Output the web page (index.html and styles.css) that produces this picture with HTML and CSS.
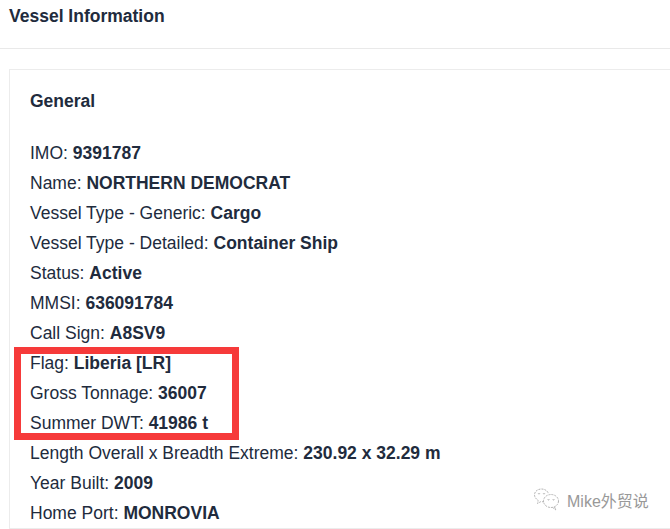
FILE: index.html
```html
<!DOCTYPE html>
<html lang="en">
<head>
<meta charset="utf-8">
<title>Vessel Information</title>
<link rel="stylesheet" href="styles.css">
</head>
<body>
<header class="page-head"><h1 class="page-title">Vessel Information</h1></header>
<main class="content">
  <section class="card">
    <h2 class="card-title">General</h2>
    <ul class="facts">
      <li>IMO: <b>9391787</b></li>
      <li>Name: <b>NORTHERN DEMOCRAT</b></li>
      <li>Vessel Type - Generic: <b>Cargo</b></li>
      <li>Vessel Type - Detailed: <b>Container Ship</b></li>
      <li>Status: <b>Active</b></li>
      <li>MMSI: <b>636091784</b></li>
      <li>Call Sign: <b>A8SV9</b></li>
      <li>Flag: <b>Liberia [LR]</b></li>
      <li>Gross Tonnage: <b>36007</b></li>
      <li>Summer DWT: <b>41986 t</b></li>
      <li>Length Overall x Breadth Extreme: <b>230.92 x 32.29 m</b></li>
      <li>Year Built: <b>2009</b></li>
      <li>Home Port: <b>MONROVIA</b></li>
    </ul>
  </section>
</main>
<div class="highlight"></div>
<div class="watermark">
  <svg class="wm-icon" width="27" height="24" viewBox="0 0 27 24" fill="none" stroke="#b4b4b4" stroke-width="1" stroke-dasharray="2 1">
    <path d="M11 13.5c-1 .3-2.200.4-3.300.2L4.500 15.500l.7-3C3 11 1.500 9 1.500 6.800 1.500 3.400 4.800 1 8.500 1c3.300 0 6.300 1.900 7 4.800"/>
    <ellipse cx="18" cy="13" rx="7.500" ry="6.500"/>
    <path d="M21.500 19l1.500 3-3.500-2.500"/>
    <circle cx="6" cy="5.500" r=".6"/>
    <circle cx="11" cy="5.500" r=".6"/>
    <circle cx="15.500" cy="11.500" r=".6"/>
    <circle cx="20.500" cy="11.500" r=".6"/>
  </svg>
  <span class="wm-text">Mike外贸说</span>
</div>
</body>
</html>
```
FILE: styles.css
```css
html, body {
  margin: 0;
  padding: 0;
  height: 529px;
  overflow: hidden;
  background: #fff;
}
body {
  font-family: "Liberation Sans", Arial, sans-serif;
  font-size: 17.500px;
  color: #212b3d;
  position: relative;
}
.page-head {
  height: 42px;
  border-bottom: 1px solid #e9e9e9;
  padding: 6px 9px 0;
}
.page-title {
  margin: 0;
  font-size: 17.500px;
  line-height: 20px;
  font-weight: 700;
}
.content { padding: 20px 0 0 9px; }
.card {
  border: 1px solid #ececec;
  border-right: 0;
  padding: 21px 20px 0;
}
.card-title {
  margin: 0 0 27px;
  font-size: 17.500px;
  line-height: 20px;
  font-weight: 700;
}
.facts {
  list-style: none;
  margin: 0;
  padding: 0;
}
.facts li {
  line-height: 30px;
  white-space: nowrap;
}
.highlight {
  position: absolute;
  left: 14px;
  top: 347px;
  width: 225px;
  height: 93px;
  box-sizing: border-box;
  border: 7px solid #f63a3a;
}
.watermark {
  position: absolute;
  left: 533px;
  top: 488px;
  display: flex;
  align-items: center;
  gap: 7px;
}
.wm-text {
  font-family: "Liberation Sans", "Noto Sans CJK SC", sans-serif;
  font-size: 16px;
  color: #999;
}
```
